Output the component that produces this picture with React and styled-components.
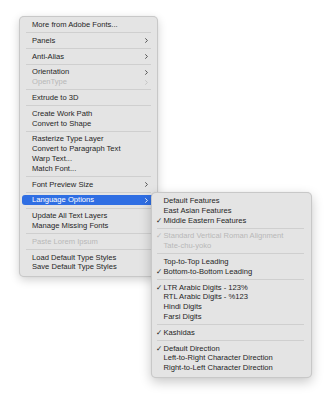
import React from 'react';
import styled, { createGlobalStyle } from 'styled-components';

const GlobalStyle = createGlobalStyle`
  html, body {
    margin: 0;
    padding: 0;
    background: #ffffff;
  }
  body {
    font-family: 'Liberation Sans', Arial, sans-serif;
    -webkit-font-smoothing: antialiased;
  }
`;

const mainGroups = [
  [{ label: 'More from Adobe Fonts...' }],
  [{ label: 'Panels', sub: true }],
  [{ label: 'Anti-Alias', sub: true }],
  [
    { label: 'Orientation', sub: true },
    { label: 'OpenType', sub: true, disabled: true },
  ],
  [{ label: 'Extrude to 3D' }],
  [{ label: 'Create Work Path' }, { label: 'Convert to Shape' }],
  [
    { label: 'Rasterize Type Layer' },
    { label: 'Convert to Paragraph Text' },
    { label: 'Warp Text...' },
    { label: 'Match Font...' },
  ],
  [{ label: 'Font Preview Size', sub: true }],
  [{ label: 'Language Options', sub: true, active: true }],
  [{ label: 'Update All Text Layers' }, { label: 'Manage Missing Fonts' }],
  [{ label: 'Paste Lorem Ipsum', disabled: true }],
  [{ label: 'Load Default Type Styles' }, { label: 'Save Default Type Styles' }],
];

const subGroups = [
  [
    { label: 'Default Features' },
    { label: 'East Asian Features' },
    { label: 'Middle Eastern Features', checked: true },
  ],
  [
    { label: 'Standard Vertical Roman Alignment', checked: true, disabled: true },
    { label: 'Tate-chu-yoko', disabled: true },
  ],
  [
    { label: 'Top-to-Top Leading' },
    { label: 'Bottom-to-Bottom Leading', checked: true },
  ],
  [
    { label: 'LTR Arabic Digits - 123%', checked: true },
    { label: 'RTL Arabic Digits - %123' },
    { label: 'Hindi Digits' },
    { label: 'Farsi Digits' },
  ],
  [{ label: 'Kashidas', checked: true }],
  [
    { label: 'Default Direction', checked: true },
    { label: 'Left-to-Right Character Direction' },
    { label: 'Right-to-Left Character Direction' },
  ],
];

const Chevron = ({ color }) => (
  <svg width="3" height="5" viewBox="0 0 3 5">
    <polyline
      points="0.6,0.6 2.4,2.5 0.6,4.4"
      fill="none"
      stroke={color}
      strokeWidth="0.9"
      strokeLinecap="round"
      strokeLinejoin="round"
    />
  </svg>
);

const App = () => {
  return (
    <Page>
      <GlobalStyle />
      <Menu>
        {mainGroups.map((group, gi) => (
          <React.Fragment key={gi}>
            {gi > 0 && <Separator />}
            {group.map((item) => (
              <Item key={item.label} $active={item.active} $disabled={item.disabled}>
                <Label>{item.label}</Label>
                {item.sub && (
                  <Arrow>
                    <Chevron color={item.active ? '#ffffff' : item.disabled ? '#c2c2c2' : '#444444'} />
                  </Arrow>
                )}
                {item.active && (
                  <SubMenu>
                    {subGroups.map((sg, si) => (
                      <React.Fragment key={si}>
                        {si > 0 && <SubSeparator />}
                        {sg.map((s) => (
                          <SubItem key={s.label} $disabled={s.disabled}>
                            <Check>{s.checked ? '✓' : ''}</Check>
                            <Label>{s.label}</Label>
                          </SubItem>
                        ))}
                      </React.Fragment>
                    ))}
                  </SubMenu>
                )}
              </Item>
            ))}
          </React.Fragment>
        ))}
      </Menu>
    </Page>
  );
};

const Page = styled.div`
  width: 330px;
  height: 400px;
  padding: 16px 0 0 19px;
  box-sizing: border-box;
  background: #ffffff;
`;

const Menu = styled.div`
  width: 139px;
  box-sizing: border-box;
  padding: 3px 0 4px;
  background: #e4e4e4;
  border: 0.5px solid rgba(0, 0, 0, 0.12);
  border-radius: 5px;
  box-shadow: 0 3px 10px rgba(0, 0, 0, 0.18), 0 0 1px rgba(0, 0, 0, 0.1);
`;

const Item = styled.div`
  position: relative;
  height: 9.8px;
  margin: 0 2px;
  padding: 0 7px 0 10px;
  display: flex;
  align-items: center;
  justify-content: space-between;
  border-radius: 3px;
  font-size: 7.6px;
  line-height: 9.8px;
  white-space: nowrap;
  color: ${(p) => (p.$active ? '#ffffff' : p.$disabled ? '#b8b8b8' : '#1f1f1f')};
  background: ${(p) => (p.$active ? '#2f6ee3' : 'transparent')};
`;

const Label = styled.span`
  display: block;
`;

const Arrow = styled.span`
  display: flex;
  align-items: center;
`;

const Separator = styled.div`
  height: 6px;
  margin: 0 6px;
  display: flex;
  align-items: center;
  &::after {
    content: '';
    flex: 1;
    height: 1px;
    background: #cfcfcf;
  }
`;

const SubMenu = styled.div`
  position: absolute;
  top: -3.4px;
  left: 128.5px;
  width: 161px;
  box-sizing: border-box;
  padding: 3px 0 4px;
  background: #e4e4e4;
  border: 0.5px solid rgba(0, 0, 0, 0.12);
  border-radius: 5px;
  box-shadow: 0 4px 12px rgba(0, 0, 0, 0.22), 0 0 1px rgba(0, 0, 0, 0.1);
  z-index: 2;
`;

const SubItem = styled.div`
  height: 9.8px;
  padding: 0 6px 0 4.5px;
  display: flex;
  align-items: center;
  font-size: 7.6px;
  line-height: 9.8px;
  white-space: nowrap;
  color: ${(p) => (p.$disabled ? '#b8b8b8' : '#1f1f1f')};
`;

const Check = styled.span`
  width: 7.5px;
  flex: none;
  font-family: 'DejaVu Sans', sans-serif;
  font-size: 7.5px;
`;

const SubSeparator = styled.div`
  height: 6px;
  margin: 0 7px 0 5px;
  display: flex;
  align-items: center;
  &::after {
    content: '';
    flex: 1;
    height: 1px;
    background: #cfcfcf;
  }
`;

export default App;
